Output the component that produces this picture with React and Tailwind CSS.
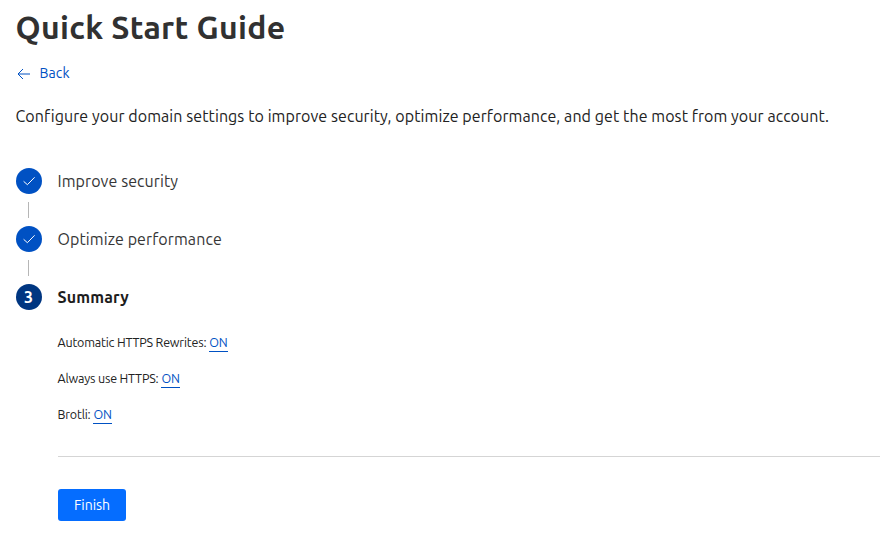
function Check() {
  return (
    <svg viewBox="0 0 16 16" className="size-4" fill="none" stroke="white" strokeWidth="1">
      <path d="M2.6 8.3 6.4 11.7 13.6 4.3" />
    </svg>
  );
}

function Badge({ children, current }) {
  return (
    <span
      className={
        current
          ? "flex size-[26px] items-center justify-center rounded-full bg-[#003681] pr-px text-[16px] font-bold text-white"
          : "flex size-[26px] items-center justify-center rounded-full bg-[#0051c3] text-white"
      }
    >
      {children}
    </span>
  );
}

function Connector() {
  return <div className="my-2 ml-3 h-4 w-px bg-[#b6b6b6]" />;
}

function Setting({ label }) {
  return (
    <p className="-ml-[0.5px] flex h-[18px] gap-[3px] text-[12.5px] leading-[17px] tracking-[-0.19px] text-[#222222]">
      <span>{label}</span>
      <a href="#" className="h-[18px] border-b border-[#0051c3] text-[#0051c3]">
        ON
      </a>
    </p>
  );
}

export default function App() {
  return (
    <main className="h-[545px] w-full overflow-hidden bg-white pt-[7px] pr-2 pl-4 font-['Ubuntu','Noto_Sans',sans-serif] whitespace-nowrap text-[#313131]">
      <h1 className="-ml-[0.5px] h-10 text-[32px] leading-10 font-bold tracking-[0.3px]">
        <span>Quick Start Guide</span>
      </h1>
      <a href="#" className="mt-4 flex h-5 w-fit items-center gap-[7.5px] text-[14px] leading-5 text-[#0051c3]">
        <svg viewBox="0 0 16 16" className="mt-0.5 size-4" fill="none" stroke="currentColor" strokeWidth="1">
          <path d="M14 8H2.3M7 3 2 8l5 5" />
        </svg>
        <span className="tracking-[0.1px]">Back</span>
      </a>
      <p className="mt-[21px] -ml-[0.5px] h-6 text-[16px] leading-6 tracking-[0.076px] text-[#222222]">
        <span>Configure your domain settings to improve security, optimize performance, and get the most from your account.</span>
      </p>
      <div className="mt-10">
        <div className="flex items-center gap-[15.5px]">
          <Badge><Check /></Badge>
          <span className="text-[16px] leading-[26px] tracking-[0.09px] text-[#363636]">Improve security</span>
        </div>
        <Connector />
        <div className="flex items-center gap-[15.5px]">
          <Badge><Check /></Badge>
          <span className="text-[16px] leading-[26px] tracking-[0.09px] text-[#363636]">Optimize performance</span>
        </div>
        <Connector />
        <div className="flex items-center gap-[15.5px]">
          <Badge current>3</Badge>
          <span className="text-[16px] leading-[26px] font-bold tracking-[0.15px] text-[#1d1d1d]">Summary</span>
        </div>
      </div>
      <div className="ml-[42px]">
        <div className="mt-6 flex flex-col gap-[18px]">
          <Setting label="Automatic HTTPS Rewrites:" />
          <Setting label="Always use HTTPS:" />
          <Setting label="Brotli:" />
        </div>
        <hr className="mt-8 border-[#d5d5d5]" />
        <button className="mt-8 flex h-8 w-[68px] items-center justify-center rounded-[3px] bg-[#056dff] text-[14px] text-white">
          Finish
        </button>
      </div>
    </main>
  );
}
